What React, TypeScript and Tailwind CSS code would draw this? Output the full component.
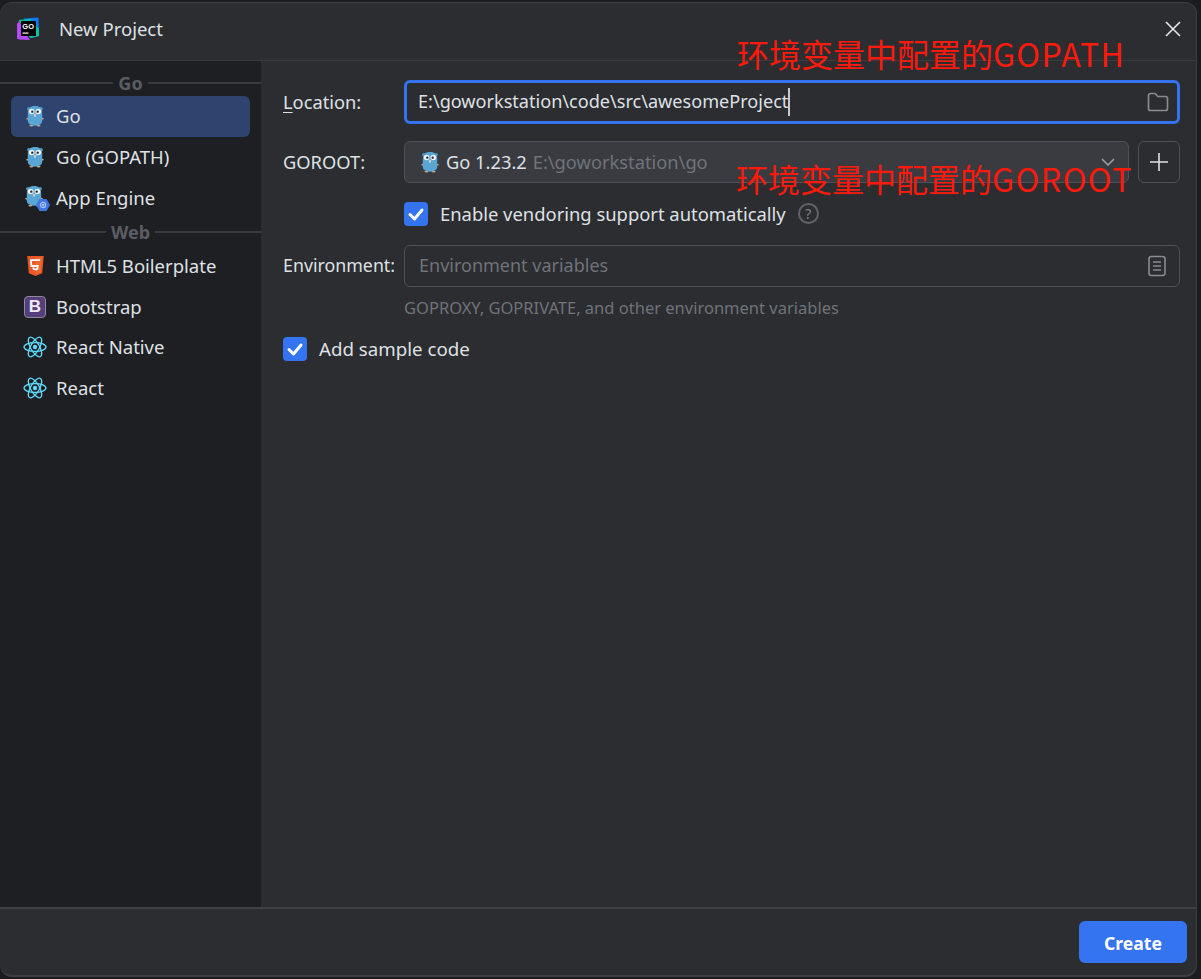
const UI_FONT = "font-['Noto_Sans','Open_Sans',sans-serif]";
const NOTE_FONT = "font-['Noto_Sans_CJK_SC','Liberation_Sans',sans-serif]";

const Gopher = ({ className = "" }: { className?: string }) => (
  <svg viewBox="0 0 20 24" className={className}>
    <ellipse cx="2" cy="15" rx="1.7" ry="1" fill="#c9a88c" />
    <ellipse cx="18" cy="15" rx="1.7" ry="1" fill="#c9a88c" />
    <ellipse cx="6" cy="22.600" rx="2.200" ry="1" fill="#c9a88c" />
    <ellipse cx="14" cy="22.600" rx="2.200" ry="1" fill="#c9a88c" />
    <circle cx="3.200" cy="4" r="2" fill="#4f97c4" />
    <circle cx="16.800" cy="4" r="2" fill="#4f97c4" />
    <path d="M10 1c5.600 0 8 3 8 7.700v8.400c0 3.600-3 5.700-8 5.700s-8-2.100-8-5.700V8.700C2 4 4.400 1 10 1z" fill="#59a5d4" />
    <circle cx="6.300" cy="7" r="3.100" fill="#f1f4f6" />
    <circle cx="13.700" cy="7" r="3.100" fill="#f1f4f6" />
    <circle cx="7" cy="7.200" r="1.300" fill="#1c2b36" />
    <circle cx="13" cy="7.200" r="1.300" fill="#1c2b36" />
    <ellipse cx="10" cy="10.400" rx="1.600" ry="1" fill="#d8c3ad" />
    <rect x="9.200" y="11.200" width="1.600" height="1.400" fill="#f1f4f6" />
  </svg>
);

const GopherEngine = () => (
  <div className="relative h-6 w-6">
    <Gopher className="absolute left-[2px] top-0 h-[22px] w-[18px]" />
    <svg viewBox="0 0 14 14" className="absolute bottom-[-3px] right-[-3px] h-[14px] w-[14px]">
      <path d="M3.500 1h7L14 7l-3.500 6h-7L0 7z" fill="#3f76e4" />
      <circle cx="7" cy="7" r="2.600" fill="none" stroke="#a9c4f7" strokeWidth="1.200" />
      <circle cx="7" cy="7" r="0.900" fill="#dbe6fb" />
    </svg>
  </div>
);

const Html5 = () => (
  <svg viewBox="0 0 20 24" className="h-[22px] w-[19px]">
    <path d="M1 1h18l-1.700 19L10 23l-7.300-3z" fill="#e8562a" />
    <path d="M10 2.600h7.200L15.800 18.800 10 21z" fill="#f0682f" />
    <path d="M15 5.500H5l.5 6.500h6.900l-.3 3.200-2.100.7-2.200-.7-.1-1.700" fill="none" stroke="#fff" strokeWidth="2" />
  </svg>
);

const BootstrapIcon = () => (
  <div className="flex h-[22px] w-[22px] items-center justify-center rounded-[4px] border border-[#8d8a9c] bg-[#563d7c] font-['Liberation_Sans',sans-serif] text-[17px] font-bold leading-none text-[#eee9f5]">
    B
  </div>
);

const ReactIcon = () => (
  <svg viewBox="0 0 24 24" className="h-6 w-6" fill="none" stroke="#61dafb" strokeWidth="1.300">
    <circle cx="12" cy="12" r="2.200" fill="#61dafb" stroke="none" />
    <ellipse cx="12" cy="12" rx="11" ry="4.400" />
    <ellipse cx="12" cy="12" rx="11" ry="4.400" transform="rotate(60 12 12)" />
    <ellipse cx="12" cy="12" rx="11" ry="4.400" transform="rotate(120 12 12)" />
  </svg>
);

const GoLandLogo = () => (
  <svg viewBox="0 0 24 24" className="h-6 w-6">
    <path d="M8 1.500 22.500.5 23 19l-8 2z" fill="#0d7bf7" />
    <path d="M2.500 3 14 2l9 10v7l-9 2z" fill="#07c3a2" />
    <path d="M1 7 3 4l9 16 2 3-11-.5-2-1z" fill="#b74af7" />
    <rect x="5" y="4" width="15" height="15" fill="#000" />
    <text x="6.300" y="11.500" fill="#fff" fontSize="7.500" fontWeight="700" fontFamily="Liberation Sans">GO</text>
    <rect x="6.500" y="15.500" width="6" height="1.200" fill="#fff" />
  </svg>
);

const CheckBox = () => (
  <span className="flex h-6 w-6 shrink-0 items-center justify-center rounded-[4px] bg-[#3574f0]">
    <svg viewBox="0 0 24 24" className="h-6 w-6" fill="none" stroke="#fff" strokeWidth="3" strokeLinecap="round" strokeLinejoin="round">
      <path d="M6 12.500 10.500 17 18 8" />
    </svg>
  </span>
);

const GroupHeader = ({ label }: { label: string }) => (
  <div className="flex h-[20px] items-center gap-[5px]">
    <div className="h-[2px] flex-1 bg-[#393b40]" />
    <span className="text-[18px] font-bold leading-none text-[#5a5d63]">{label}</span>
    <div className="h-[2px] flex-1 bg-[#393b40]" />
  </div>
);

const SideItem = ({ icon, label, active }: { icon: React.ReactNode; label: string; active?: boolean }) => (
  <div className={`mx-[11px] flex h-[40.600px] items-center rounded-[6px] pl-[12px] ${active ? "bg-[#2e436e]" : ""}`}>
    <span className="flex w-[24px] justify-center">{icon}</span>
    <span className="ml-[9px] text-[18.500px] text-[#dfe1e5]">{label}</span>
  </div>
);

export default function App() {
  return (
    <div className={`h-[979px] w-[1201px] overflow-hidden bg-[#1b1c1e] pb-[2px] pr-[4px] pt-[2px] ${UI_FONT}`}>
      <div className="relative flex h-full flex-col overflow-hidden rounded-[12px] border-b-2 border-r border-t border-[#3c3e42] bg-[#2b2d30]">
        {/* title bar */}
        <div className="flex h-[58px] shrink-0 items-center border-b border-[#393b40] pb-[6px] pl-[16px] pr-[14px]">
          <GoLandLogo />
          <span className="ml-[19px] text-[18.500px] text-[#dfe1e5]">New Project</span>
          <svg viewBox="0 0 18 18" className="ml-auto h-[18px] w-[18px]" stroke="#e6e7ea" strokeWidth="1.600" fill="none">
            <path d="M2 2 16 16M16 2 2 16" />
          </svg>
        </div>

        <div className="flex min-h-0 flex-1">
          {/* sidebar */}
          <div className="w-[261px] shrink-0 bg-[#1e1f22] pt-[12px]">
            <GroupHeader label="Go" />
            <div className="mt-[3px]">
              <SideItem active icon={<Gopher className="h-[22px] w-[18px]" />} label="Go" />
              <SideItem icon={<Gopher className="h-[22px] w-[18px]" />} label="Go (GOPATH)" />
              <SideItem icon={<GopherEngine />} label="App Engine" />
            </div>
            <div className="mt-[4px]">
              <GroupHeader label="Web" />
            </div>
            <div className="mt-[4px]">
              <SideItem icon={<Html5 />} label="HTML5 Boilerplate" />
              <SideItem icon={<BootstrapIcon />} label="Bootstrap" />
              <SideItem icon={<ReactIcon />} label="React Native" />
              <SideItem icon={<ReactIcon />} label="React" />
            </div>
          </div>

          {/* form */}
          <div className="flex-1 pl-[22px] pr-[16px] pt-[19px] text-[18.300px] text-[#dfe1e5]">
            <div className="flex items-center">
              <span className="w-[121px] pb-[1px]">
                <span className="underline underline-offset-[3px]">L</span>ocation:
              </span>
              <div className="flex h-[44px] flex-1 items-center rounded-[6px] border-[3px] border-[#3574f0] pl-[11px] pr-[8px]">
                <span className="pb-[1px] text-[18.100px]">E:\goworkstation\code\src\awesomeProject</span>
                <span className="h-[28px] w-[2px] bg-[#c9cbd0]" />
                <svg viewBox="0 0 22 20" className="ml-auto h-[20px] w-[22px]" fill="none" stroke="#868a91" strokeWidth="1.700" strokeLinejoin="round">
                  <path d="M1.500 3.500A2 2 0 0 1 3.500 1.500h4.700l2.600 3h7.700a2 2 0 0 1 2 2V16.500a2 2 0 0 1-2 2H3.500a2 2 0 0 1-2-2z" />
                </svg>
              </div>
            </div>

            <div className="mt-[17px] flex items-center">
              <span className="w-[121px] pb-[1px]">GOROOT:</span>
              <div className="flex h-[42px] flex-1 items-center rounded-[6px] border border-[#4e5157] bg-[#393b40] pl-[16px] pr-[13px]">
                <Gopher className="h-[22px] w-[18px]" />
                <span className="ml-[7px]">Go 1.23.2</span>
                <span className="ml-[6px] text-[#6f737a]">E:\goworkstation\go</span>
                <svg viewBox="0 0 14 8" className="ml-auto h-[8px] w-[14px]" fill="none" stroke="#9da0a8" strokeWidth="1.500">
                  <path d="M1 1l6 6 6-6" />
                </svg>
              </div>
              <div className="ml-[9px] flex h-[42px] w-[42px] items-center justify-center rounded-[6px] border border-[#4e5157]">
                <svg viewBox="0 0 20 20" className="h-5 w-5" stroke="#dfe1e5" strokeWidth="1.600">
                  <path d="M10 1v18M1 10h18" />
                </svg>
              </div>
            </div>

            <div className="ml-[121px] mt-[17px] flex items-center">
              <CheckBox />
              <span className="ml-[12px] text-[18.400px]">Enable vendoring support automatically</span>
              <span className="ml-[12px] flex h-[21px] w-[21px] items-center justify-center rounded-full border-2 border-[#5f6268] text-[14px] leading-none text-[#7d8087]">?</span>
            </div>

            <div className="mt-[17.200px] flex items-center">
              <span className="w-[121px] pb-[1px] text-[17.800px]">Environment:</span>
              <div className="flex h-[42px] flex-1 items-center rounded-[6px] border border-[#4e5157] pl-[14px] pr-[12px]">
                <span className="text-[18px] text-[#6f737a]">Environment variables</span>
                <svg viewBox="0 0 20 22" className="ml-auto h-[22px] w-[20px]" fill="none" stroke="#868a91" strokeWidth="1.600">
                  <rect x="2" y="1.500" width="16" height="19" rx="2.500" />
                  <path d="M6 7h8M6 11h8M6 15h8" />
                </svg>
              </div>
            </div>

            <div className="ml-[121px] mt-[9px] text-[16.500px] leading-[24px] text-[#6f737a]">
              GOPROXY, GOPRIVATE, and other environment variables
            </div>

            <div className="mt-[15px] flex items-center">
              <CheckBox />
              <span className="ml-[12px] text-[18.700px]">Add sample code</span>
            </div>
          </div>
        </div>

        {/* footer */}
        <div className="flex h-[68px] shrink-0 items-center justify-end border-t-2 border-[#3f4145] pr-[9px]">
          <button className="flex h-[42px] w-[108px] items-center justify-center rounded-[6px] bg-[#3574f0] pt-[2px] text-[17.600px] font-bold text-white">
            Create
          </button>
        </div>

        {/* red notes drawn on top of the screenshot */}
        <div className={`absolute left-[737px] top-[30px] whitespace-nowrap text-[32px] leading-[40px] text-[#fb1a0c] ${NOTE_FONT}`}>
          环境变量中配置的<span className="tracking-[1.300px]">GOPATH</span>
        </div>
        <div className={`absolute left-[736px] top-[155px] whitespace-nowrap text-[32px] leading-[40px] text-[#fb1a0c] ${NOTE_FONT}`}>
          环境变量中配置的<span className="tracking-[1.500px]">GOROOT</span>
        </div>
      </div>
    </div>
  );
}
